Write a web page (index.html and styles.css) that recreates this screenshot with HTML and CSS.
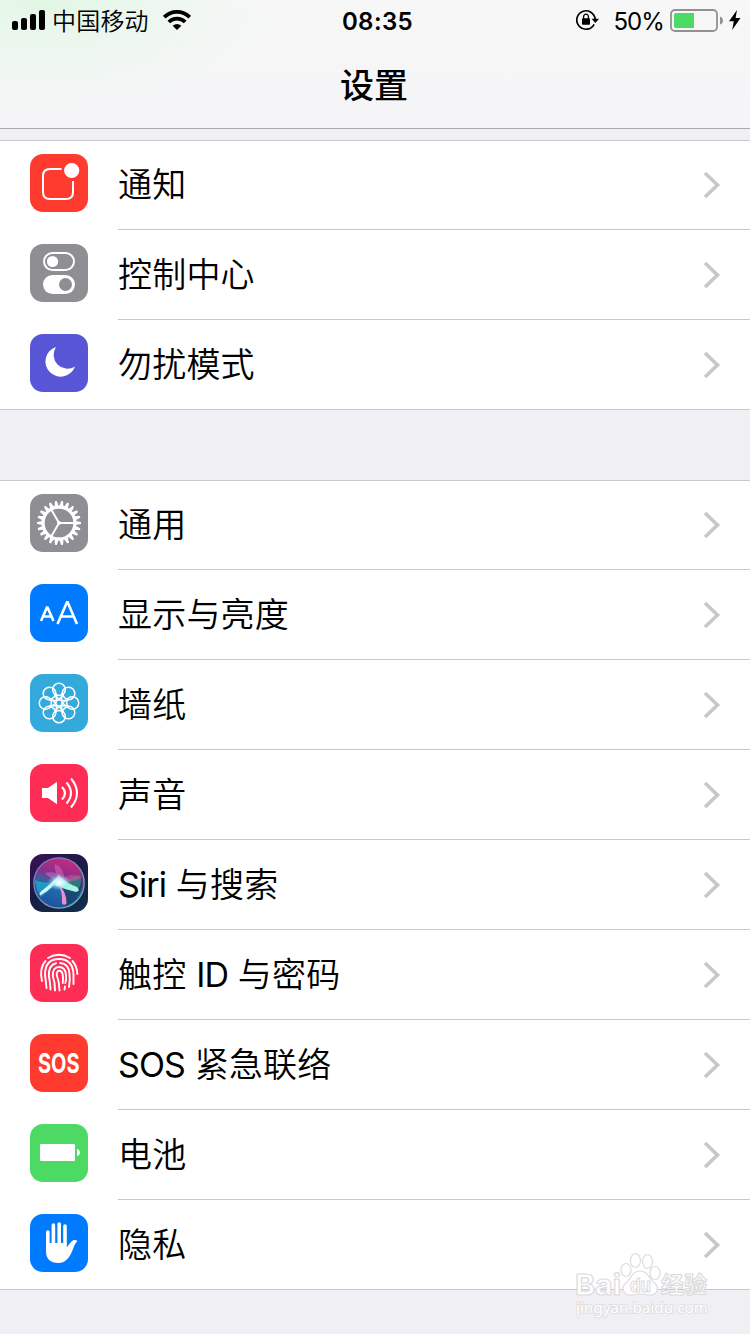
FILE: index.html
```
<!DOCTYPE html>
<html lang="zh">
<head>
  <meta charset="UTF-8">
  <title>设置</title>
  <link rel="stylesheet" href="styles.css">
</head>
<body>
  <svg class="defs" width="0" height="0">
    <symbol id="chevron" viewBox="0 0 18 28">
      <path d="M2 2 L14.5 14 L2 26" fill="none" stroke="#c7c7cc" stroke-width="3.6"/>
    </symbol>
  </svg>

  <header class="header">
    <div class="status">
      <div class="status-left">
        <svg width="34" height="20" viewBox="0 0 34 20">
          <rect x="0" y="11" width="6" height="9" rx="2"/>
          <rect x="9" y="8" width="6" height="12" rx="2"/>
          <rect x="18" y="4" width="6" height="16" rx="2"/>
          <rect x="27" y="0" width="6" height="20" rx="2"/>
        </svg>
        <span class="carrier">中国移动</span>
        <svg width="28" height="20" viewBox="0 0 28 20">
          <g fill="none" stroke="#000" stroke-width="3.8">
            <path d="M1.3 7.2 A18 18 0 0 1 26.7 7.2"/>
            <path d="M5.8 12 A11.6 11.6 0 0 1 22.2 12"/>
          </g>
          <path d="M14 20 L9.6 15.8 Q14 12.1 18.4 15.8 Z"/>
        </svg>
      </div>
      <div class="time">08:35</div>
      <div class="status-right">
        <svg width="24" height="22" viewBox="0 0 24 22">
          <path d="M18.1 15.3 A9.2 9.2 0 1 1 19.1 10" fill="none" stroke="#000" stroke-width="1.7"/>
          <path d="M15.6 9.8 H23 L19.3 14 Z"/>
          <rect x="6" y="9.3" width="8" height="6.4" rx="0.8"/>
          <path d="M7.6 10 V7.6 A2.4 2.4 0 0 1 12.4 7.6 V10" fill="none" stroke="#000" stroke-width="1.3"/>
        </svg>
        <span class="percent">50%</span>
        <svg width="53" height="24" viewBox="0 0 53 24">
          <rect x="1" y="2" width="46" height="21" rx="4" fill="none" stroke="#919191" stroke-width="1.8"/>
          <path d="M4 7 Q4 5 6 5 H24 V20 H6 Q4 20 4 18 Z" fill="#4cd964"/>
          <path d="M50 8.5 Q53 9.5 53 12.5 T50 16.5 Z" fill="#919191"/>
        </svg>
        <svg class="bolt" width="12" height="20" viewBox="0 0 12 20">
          <path d="M8 0 L0 11.3 H4.8 L3.2 20 L11.5 8 H6.6 Z"/>
        </svg>
      </div>
    </div>
    <h1 class="title">设置</h1>
  </header>

  <main>
    <ul class="group">
      <li class="row">
        <svg class="icon red" viewBox="0 0 58 58">
          <path d="M31.5 15 H20 Q13 15 13 22 V38 Q13 45 20 45 H36 Q43 45 43 38 V27" fill="none" stroke="#fff" stroke-width="2"/>
          <circle cx="41.7" cy="16.5" r="7.6" fill="#fff"/>
        </svg>
        <div class="cell"><span>通知</span><svg class="chevron"><use href="#chevron"/></svg></div>
      </li>
      <li class="row">
        <svg class="icon gray" viewBox="0 0 58 58">
          <rect x="14" y="9" width="30" height="17" rx="8.5" fill="none" stroke="#fff" stroke-width="2"/>
          <circle cx="22.5" cy="17.5" r="5.6" fill="#fff"/>
          <rect x="13" y="31" width="32" height="19" rx="9.5" fill="#fff"/>
          <circle cx="35.5" cy="40.5" r="6.5" fill="#8e8e93"/>
        </svg>
        <div class="cell"><span>控制中心</span><svg class="chevron"><use href="#chevron"/></svg></div>
      </li>
      <li class="row">
        <svg class="icon purple" viewBox="0 0 58 58">
          <path d="M26 13 A15.2 15.2 0 1 0 45 32.5 A13.9 13.9 0 0 1 26 13 Z" fill="#fff"/>
        </svg>
        <div class="cell"><span>勿扰模式</span><svg class="chevron"><use href="#chevron"/></svg></div>
      </li>
    </ul>

    <ul class="group">
      <li class="row">
        <svg class="icon gray" viewBox="0 0 58 58">
          <defs>
            <path id="tooth" d="M26.9 12.5 L28 7 H30 L31.1 12.5 Z M26.9 45.5 L28 51 H30 L31.1 45.5 Z"/>
          </defs>
          <g fill="none" stroke="#fff">
            <circle cx="29" cy="29" r="15.9" stroke-width="3.1"/>
            <path d="M29 29 H45 M29 29 L21 15.1 M29 29 L21 42.9" stroke-width="2"/>
          </g>
          <g fill="#fff">
            <circle cx="29" cy="29" r="2"/>
            <use href="#tooth" transform="rotate(8.2 29 29)"/>
            <use href="#tooth" transform="rotate(24.5 29 29)"/>
            <use href="#tooth" transform="rotate(40.9 29 29)"/>
            <use href="#tooth" transform="rotate(57.3 29 29)"/>
            <use href="#tooth" transform="rotate(73.6 29 29)"/>
            <use href="#tooth" transform="rotate(90 29 29)"/>
            <use href="#tooth" transform="rotate(106.4 29 29)"/>
            <use href="#tooth" transform="rotate(122.7 29 29)"/>
            <use href="#tooth" transform="rotate(139.1 29 29)"/>
            <use href="#tooth" transform="rotate(155.5 29 29)"/>
            <use href="#tooth" transform="rotate(171.8 29 29)"/>
          </g>
        </svg>
        <div class="cell"><span>通用</span><svg class="chevron"><use href="#chevron"/></svg></div>
      </li>
      <li class="row">
        <svg class="icon blue" viewBox="0 0 58 58">
          <g fill="none" stroke="#fff" stroke-linejoin="bevel">
            <path d="M11 37 L17.2 22.8 L23.5 37 M13 32.5 H21.5" stroke-width="2.6"/>
            <path d="M27.5 40 L37.3 17.5 L47 40 M31 32.5 H43.8" stroke-width="2.6"/>
          </g>
        </svg>
        <div class="cell"><span>显示与亮度</span><svg class="chevron"><use href="#chevron"/></svg></div>
      </li>
      <li class="row">
        <svg class="icon sky" viewBox="0 0 58 58">
          <defs>
            <path id="petal" d="M29 25.6 L24 19.4 A6.3 6.3 0 1 1 34 19.4 Z M24 19.4 Q29 23.4 34 19.4"/>
          </defs>
          <g fill="none" stroke="#fff" stroke-width="1.5">
            <circle cx="29" cy="29" r="3.2"/>
            <use href="#petal"/>
            <use href="#petal" transform="rotate(45 29 29)"/>
            <use href="#petal" transform="rotate(90 29 29)"/>
            <use href="#petal" transform="rotate(135 29 29)"/>
            <use href="#petal" transform="rotate(180 29 29)"/>
            <use href="#petal" transform="rotate(225 29 29)"/>
            <use href="#petal" transform="rotate(270 29 29)"/>
            <use href="#petal" transform="rotate(315 29 29)"/>
          </g>
        </svg>
        <div class="cell"><span>墙纸</span><svg class="chevron"><use href="#chevron"/></svg></div>
      </li>
      <li class="row">
        <svg class="icon pink" viewBox="0 0 58 58">
          <path d="M12 24 H18 L27 17.8 V40.2 L18 34 H12 Z" fill="#fff"/>
          <g fill="none" stroke="#fff" stroke-width="2.1">
            <path d="M32 23 Q38 29 32 35.5"/>
            <path d="M36.5 18.5 Q45.5 29 36.5 39.5"/>
            <path d="M41 14.5 Q53 29 41 43.5"/>
          </g>
        </svg>
        <div class="cell"><span>声音</span><svg class="chevron"><use href="#chevron"/></svg></div>
      </li>
      <li class="row">
        <svg class="icon siri" viewBox="0 0 58 58">
          <defs>
            <linearGradient id="orb" x1="0.65" y1="0" x2="0.35" y2="1">
              <stop offset="0" stop-color="#c92a7c"/>
              <stop offset="0.35" stop-color="#8a2f8c"/>
              <stop offset="0.6" stop-color="#1f6fa8"/>
              <stop offset="1" stop-color="#1e4fa0"/>
            </linearGradient>
            <linearGradient id="rim" x1="0" y1="0" x2="1" y2="1">
              <stop offset="0" stop-color="#8d6ac0"/>
              <stop offset="1" stop-color="#6fb8b0"/>
            </linearGradient>
            <radialGradient id="glow">
              <stop offset="0" stop-color="#fff"/>
              <stop offset="0.4" stop-color="#d5f8ff" stop-opacity="0.8"/>
              <stop offset="1" stop-color="#5fd5ef" stop-opacity="0"/>
            </radialGradient>
          </defs>
          <circle cx="29" cy="29" r="25" fill="url(#orb)"/>
          <path d="M30 29 L52 24 A24 24 0 0 1 35 52 Z" fill="#173a5c" opacity="0.7"/>
          <path d="M29 28 L50 21 Q53 26 49 34 Z" fill="#319f8d" opacity="0.6"/>
          <path d="M29 28 Q13 30 5 26 Q6 36 11 43 Z" fill="#23b9d3" opacity="0.6"/>
          <path d="M30 28 Q24 17 25 10 Q34 13 35 28 Z" fill="#ec7fc8" opacity="0.4"/>
          <path d="M30 28 Q20 25 15 19 Q28 16 36 27 Z" fill="#dfa1e5" opacity="0.35"/>
          <path d="M30 28 Q40 16 50 23 Q49 28 30 28 Z" fill="#dc4fa0" opacity="0.5"/>
          <path d="M30 20 Q25 34 10 41.5 Q8 39 14 35 Q24 27 30 20 Z" fill="#d0f8fd"/>
          <path d="M29 22 Q38 30 47 33 Q51 37 46 38 Q36 36 25 31 Z" fill="#a5f5e2"/>
          <path d="M27 29 Q37 37 36.5 50 Q33 52 32 49 Q33 37 27 29 Z" fill="#ee8ed2"/>
          <ellipse cx="29" cy="28.5" rx="12" ry="8" fill="url(#glow)"/>
          <circle cx="29" cy="29" r="25.2" fill="none" stroke="url(#rim)" stroke-width="1.3"/>
        </svg>
        <div class="cell"><span><span class="latin">Siri</span> 与搜索</span><svg class="chevron"><use href="#chevron"/></svg></div>
      </li>
      <li class="row">
        <svg class="icon pink" viewBox="0 0 58 58">
          <g fill="none" stroke="#fff" stroke-width="1.9" stroke-linecap="round">
            <path d="M18 14 Q29 7.5 40 14"/>
            <path d="M15.5 17 Q9 24 12 37"/>
            <path d="M42.5 17 Q47 22 47.3 30"/>
            <path d="M16.5 44 Q15.8 36 15 31 Q15 15 29 15 Q43 15 43.5 31 L43.5 40"/>
            <path d="M20.5 45.5 Q20 37 18.8 32 Q18.5 21 26 19.3"/>
            <path d="M30 19 Q39 19.5 39.5 30 Q40.3 36 39 43"/>
            <path d="M25 46.5 Q25 38 22.8 32 Q22.5 23 29 23 Q35.5 23 36 31 Q36.5 36 35.3 39"/>
            <path d="M29.5 46.5 Q29.5 38 26.7 31 Q26.5 26.5 29.5 26.7 Q34 27 32.8 39"/>
            <path d="M35 42.5 L34.5 45.5"/>
          </g>
        </svg>
        <div class="cell"><span>触控 <span class="latin">ID</span> 与密码</span><svg class="chevron"><use href="#chevron"/></svg></div>
      </li>
      <li class="row">
        <svg class="icon red" viewBox="0 0 58 58">
          <text class="sos" x="8" y="38.6" textLength="41.5" lengthAdjust="spacingAndGlyphs">SOS</text>
        </svg>
        <div class="cell"><span><span class="latin">SOS</span> 紧急联络</span><svg class="chevron"><use href="#chevron"/></svg></div>
      </li>
      <li class="row">
        <svg class="icon green" viewBox="0 0 58 58">
          <rect x="10" y="20" width="35" height="17" rx="1" fill="#fff"/>
          <path d="M47 25 Q50 26 50 28.5 T47 32 Z" fill="#fff"/>
        </svg>
        <div class="cell"><span>电池</span><svg class="chevron"><use href="#chevron"/></svg></div>
      </li>
      <li class="row">
        <svg class="icon blue" viewBox="0 0 58 58">
          <g stroke="#fff" stroke-width="3.6" stroke-linecap="round">
            <path d="M17.8 18 V34"/>
            <path d="M23.4 11 V30"/>
            <path d="M29.2 10 V30"/>
            <path d="M35 12 V30"/>
          </g>
          <path d="M16 29 H36.8 V33.5 Q39 30 41.5 27.5 Q44.5 25 47.5 27 Q45 29 43 35 Q38 49 28.5 49 Q16 49 16 37 Z" fill="#fff"/>
        </svg>
        <div class="cell"><span>隐私</span><svg class="chevron"><use href="#chevron"/></svg></div>
      </li>
    </ul>
  </main>

  <svg class="watermark" width="150" height="74" viewBox="0 0 150 74">
    <g fill="#fff" stroke="#dcdcde" stroke-width="1.2">
      <ellipse cx="50" cy="20" rx="5" ry="6.5"/>
      <ellipse cx="59.5" cy="10.5" rx="5" ry="7"/>
      <ellipse cx="71.5" cy="11.5" rx="5" ry="7"/>
      <ellipse cx="79" cy="23" rx="5" ry="6.5"/>
      <path d="M64 21 C56 21 55 29 50 33 C44 38 48 46 56 45 Q64 43 72 45 C81 46 84 38 78.5 33 C73 29 72 21 64 21 Z"/>
    </g>
    <g class="wm-logo">
      <text x="-1" y="44.5" textLength="46" lengthAdjust="spacingAndGlyphs">Bai</text>
      <text class="wm-du" x="54" y="42" textLength="21" lengthAdjust="spacingAndGlyphs">du</text>
      <text class="wm-cn" x="85" y="43" textLength="46">经验</text>
    </g>
    <text class="wm-url" x="0" y="63" textLength="132" lengthAdjust="spacingAndGlyphs">jingyan.baidu.com</text>
  </svg>
</body>
</html>
```
FILE: styles.css
```
body {
  margin: 0;
  background: #efeff4;
  color: #000;
  font-family: Inter, "Noto Sans CJK SC", sans-serif;
  position: relative;
  height: 1334px;
  overflow: hidden;
}
.defs {
  position: absolute;
}
svg {
  flex: none;
}

/* header */
.header {
  box-sizing: border-box;
  height: 129px;
  border-bottom: 1px solid #a7a7ac;
  background:
    radial-gradient(ellipse 230px 110px at 45px 0, #e2f7e5 0%, rgba(232, 247, 235, 0.6) 50%, rgba(245, 247, 246, 0) 100%),
    linear-gradient(#f7f7f7, #f5f5f7);
}
.status {
  display: grid;
  grid-template-columns: 1fr auto 1fr;
  align-items: center;
  height: 40px;
  padding: 0 9px 0 12px;
  font-size: 24px;
}
.status-left,
.status-right {
  display: flex;
  align-items: center;
}
.status-right {
  justify-content: flex-end;
}
.carrier {
  font-family: "Noto Sans CJK SC", sans-serif;
  font-weight: 350;
  line-height: 36px;
  letter-spacing: 0.2px;
  margin: 0 14px 1px 6px;
}
.time {
  font-weight: 600;
  letter-spacing: 0.4px;
  padding: 2px 0 0 2px;
}
.percent {
  margin: 2px 6px 0 13px;
  letter-spacing: -0.9px;
}
.bolt {
  margin-left: 6px;
}
.title {
  margin: 0;
  padding: 21px 2px 0 0;
  text-align: center;
  font-size: 34px;
  line-height: 50px;
  font-weight: 500;
}

/* list */
.group {
  list-style: none;
  margin: 11px 0 70px;
  padding: 0;
  background: #fff;
  box-shadow: inset 0 1px #c8c7cc;
}
.row {
  display: flex;
  height: 90px;
  padding-left: 30px;
}
.icon {
  width: 58px;
  height: 58px;
  margin: 14px 30px 0 0;
  border-radius: 13px;
}
.cell {
  flex: 1;
  display: flex;
  align-items: center;
  justify-content: space-between;
  box-sizing: border-box;
  border-bottom: 1px solid #c8c7cc;
  padding-right: 29px;
  font-size: 34px;
  font-weight: 350;
  line-height: 50px;
  letter-spacing: 0.2px;
}
.cell > span {
  padding-top: 1px;
}
.row:last-child {
  box-shadow: inset 0 -1px #c8c7cc;
}
.chevron {
  width: 18px;
  height: 28px;
}
.latin {
  font-weight: 400;
  letter-spacing: -0.9px;
}
.red { background: #ff3b30; }
.gray { background: #8e8e93; }
.purple { background: #5856d6; }
.blue { background: #007aff; }
.sky { background: #34aadc; }
.pink { background: #ff2d55; }
.green { background: #4cd964; }
.siri { background: linear-gradient(150deg, #3c1058, #171c43 50%, #12304d); }
.sos {
  font-family: Inter, sans-serif;
  font-weight: 700;
  font-size: 27px;
  fill: #fff;
}

/* watermark */
.watermark {
  position: absolute;
  left: 576px;
  top: 1250px;
}
.wm-logo {
  font-family: Inter, "Noto Sans CJK SC", sans-serif;
  font-weight: 700;
  font-size: 29px;
  fill: #fff;
  stroke: #dcdcde;
  stroke-width: 1.2px;
}
.wm-du {
  font-size: 19px;
}
.wm-cn {
  font-size: 23px;
}
.wm-url {
  font-family: "Noto Sans", sans-serif;
  font-size: 15px;
  fill: #fff;
  stroke: #dcdcde;
  stroke-width: 1.6px;
  paint-order: stroke;
}
```
